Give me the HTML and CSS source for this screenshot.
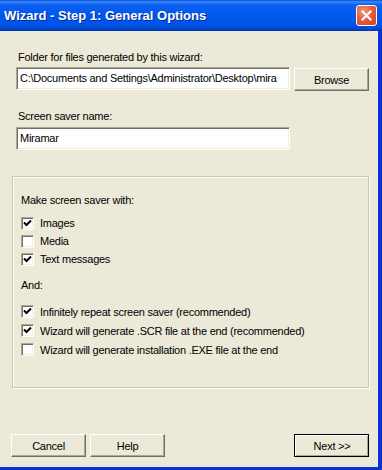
FILE: index.html
```html
<!DOCTYPE html>
<html lang="en">
<head>
  <meta charset="UTF-8">
  <title>Wizard - Step 1: General Options</title>
  <link rel="stylesheet" href="styles.css">
</head>
<body>
  <div class="window">
    <!-- Title bar -->
    <div class="titlebar">
      <span class="title">Wizard - Step 1: General Options</span>
      <button class="close" aria-label="Close">
        <svg width="11" height="11" viewBox="0 0 11 11">
          <path d="M1.5 1.5 L9.5 9.5 M9.5 1.5 L1.5 9.5" stroke="#fff" stroke-width="2" stroke-linecap="square"/>
        </svg>
      </button>
    </div>

    <div class="client">
      <label class="field-label">Folder for files generated by this wizard:</label>
      <div class="path-row">
        <div class="textbox path">C:\Documents and Settings\Administrator\Desktop\mira</div>
        <button class="btn browse">Browse</button>
      </div>

      <label class="field-label name-label">Screen saver name:</label>
      <div class="textbox name">Miramar</div>

      <!-- Options group -->
      <div class="group">
        <p class="caption">Make screen saver with:</p>
        <ul class="checks">
          <li><span class="cb"><svg width="9" height="9" viewBox="0 0 9 9"><path d="M1 3.5 L3.5 6 L8 1.5" fill="none" stroke="#000" stroke-width="2"/></svg></span>Images</li>
          <li><span class="cb"></span>Media</li>
          <li><span class="cb"><svg width="9" height="9" viewBox="0 0 9 9"><path d="M1 3.5 L3.5 6 L8 1.5" fill="none" stroke="#000" stroke-width="2"/></svg></span>Text messages</li>
        </ul>

        <p class="caption and">And:</p>
        <ul class="checks wide">
          <li><span class="cb"><svg width="9" height="9" viewBox="0 0 9 9"><path d="M1 3.5 L3.5 6 L8 1.5" fill="none" stroke="#000" stroke-width="2"/></svg></span>Infinitely repeat screen saver (recommended)</li>
          <li><span class="cb"><svg width="9" height="9" viewBox="0 0 9 9"><path d="M1 3.5 L3.5 6 L8 1.5" fill="none" stroke="#000" stroke-width="2"/></svg></span>Wizard will generate .SCR file at the end (recommended)</li>
          <li><span class="cb"></span>Wizard will generate installation .EXE file at the end</li>
        </ul>
      </div>

      <div class="actions">
        <button class="btn">Cancel</button>
        <button class="btn">Help</button>
        <button class="btn default">Next &gt;&gt;</button>
      </div>
    </div>
  </div>
</body>
</html>
```

FILE: styles.css
```css
/* General */
body {
  margin: 0;
  font-family: 'Liberation Sans', Arial, sans-serif;
  font-size: 11px;
  letter-spacing: -0.25px;
  color: #000;
}

.window {
  width: 382px;
  height: 470px;
  background: #0831d9;
  display: flex;
  flex-direction: column;
}

/* Title bar */
.titlebar {
  height: 31px;
  box-sizing: border-box;
  display: flex;
  align-items: center;
  padding: 0 5px 0 4px;
  background: linear-gradient(to bottom, #0a48d8 0%, #3a8cff 6%, #0f62f0 14%, #0058ee 45%, #0055e8 80%, #0046d0 94%, #00349e 100%);
}

.title {
  flex: 1;
  color: #fff;
  font-weight: bold;
  font-size: 13px;
  letter-spacing: 0;
  text-shadow: 1px 1px 0 #0a2a8a;
  margin-top: -1px;
}

.close {
  width: 21px;
  height: 21px;
  padding: 0;
  border: 1px solid #fff;
  border-radius: 3px;
  background: radial-gradient(circle at 35% 30%, #f39a7c 0%, #e4603e 45%, #c8421f 100%);
  display: flex;
  align-items: center;
  justify-content: center;
}

/* Client area */
.client {
  flex: 1;
  background: #ece9d8;
  margin: 0 4px 3px 0;
  padding: 20px 9px 0 16px;
  display: flex;
  flex-direction: column;
}

.field-label {
  display: block;
  line-height: 13px;
  margin: 0 0 3px 2px;
}

.name-label {
  margin-top: 19px;
  margin-bottom: 4px;
}

.textbox {
  height: 23px;
  box-sizing: border-box;
  background: #fff;
  border: 1px solid;
  border-color: #aca899 #fff #fff #aca899;
  box-shadow: inset 1px 1px 0 #716f64, inset -1px -1px 0 #f1efe2;
  padding: 4px 3px 0;
  line-height: 13px;
  white-space: nowrap;
  overflow: hidden;
}

.path-row {
  display: flex;
  align-items: flex-start;
}

.path {
  flex: 1;
}

.name {
  width: 274px;
}

/* Buttons */
.btn {
  width: 75px;
  height: 23px;
  box-sizing: border-box;
  background: #ece9d8;
  border: 1px solid;
  border-color: #fff #716f64 #716f64 #fff;
  box-shadow: inset -1px -1px 0 #aca899;
  font-family: inherit;
  font-size: 11px;
  letter-spacing: inherit;
  color: #000;
  padding: 0;
}

.browse {
  margin: 1px 0 0 4px;
}

.btn.default {
  outline: 1px solid #000;
  outline-offset: -1px;
  border-width: 2px 1px 1px 2px;
  border-color: #fff #404040 #404040 #fff;
  margin-left: auto;
}

/* Options group */
.group {
  margin: 26px 0 0 -4px;
  height: 212px;
  box-sizing: border-box;
  border: 1px solid #c6c3b1;
  box-shadow: inset 1px 1px 0 #fff, 1px 1px 0 #fff;
  padding: 17px 8px 0;
}

.caption {
  margin: 0;
  line-height: 13px;
}

.checks {
  list-style: none;
  margin: 7px 0 0;
  padding: 0;
}

.checks li {
  height: 18px;
  display: flex;
  align-items: center;
}

.checks.wide li {
  height: 19px;
}

.and {
  margin-top: 11px;
}

.checks.wide {
  margin-top: 10px;
}

.cb {
  width: 13px;
  height: 13px;
  box-sizing: border-box;
  margin-right: 6px;
  background: #fff;
  border: 1px solid;
  border-color: #aca899 #fff #fff #aca899;
  box-shadow: inset 1px 1px 0 #716f64, inset -1px -1px 0 #f1efe2;
  display: flex;
  align-items: center;
  justify-content: center;
}

/* Bottom buttons */
.actions {
  display: flex;
  gap: 4px;
  margin: 46px 0 0 -5px;
}
```
